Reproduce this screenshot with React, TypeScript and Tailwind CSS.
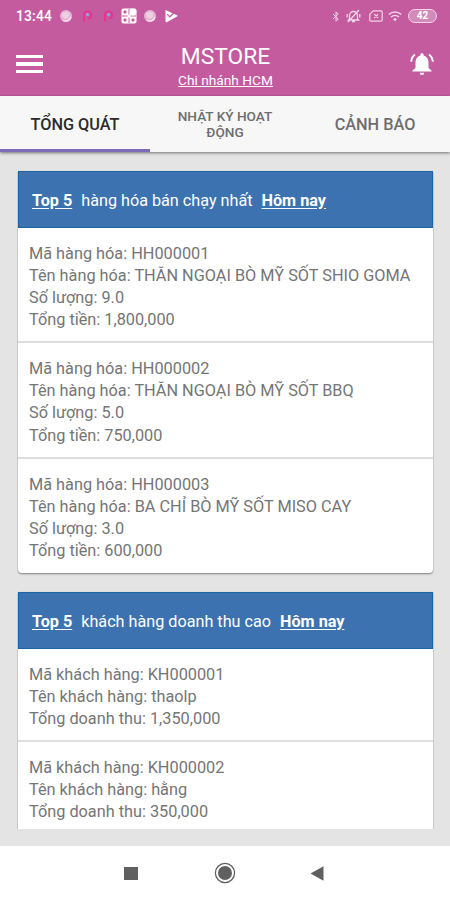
import React, { useState } from "react";

type Line = { label: string; value: string };

const products: Line[][] = [
  [
    { label: "Mã hàng hóa", value: "HH000001" },
    { label: "Tên hàng hóa", value: "THĂN NGOẠI BÒ MỸ SỐT SHIO GOMA" },
    { label: "Số lượng", value: "9.0" },
    { label: "Tổng tiền", value: "1,800,000" },
  ],
  [
    { label: "Mã hàng hóa", value: "HH000002" },
    { label: "Tên hàng hóa", value: "THĂN NGOẠI BÒ MỸ SỐT BBQ" },
    { label: "Số lượng", value: "5.0" },
    { label: "Tổng tiền", value: "750,000" },
  ],
  [
    { label: "Mã hàng hóa", value: "HH000003" },
    { label: "Tên hàng hóa", value: "BA CHỈ BÒ MỸ SỐT MISO CAY" },
    { label: "Số lượng", value: "3.0" },
    { label: "Tổng tiền", value: "600,000" },
  ],
];

const customers: Line[][] = [
  [
    { label: "Mã khách hàng", value: "KH000001" },
    { label: "Tên khách hàng", value: "thaolp" },
    { label: "Tổng doanh thu", value: "1,350,000" },
  ],
  [
    { label: "Mã khách hàng", value: "KH000002" },
    { label: "Tên khách hàng", value: "hằng" },
    { label: "Tổng doanh thu", value: "350,000" },
  ],
];

const Blob = () => (
  <svg className="h-[14px] w-[14px]" viewBox="0 0 14 14">
    <circle cx="7" cy="7" r="6" fill="#e3b4d3" />
    <path d="M3 4.5 7 2.5l3.5 2-1 4L6 10 3.5 8z" fill="#eed0e3" />
    <path d="M4 11.5a5.5 5.5 0 0 0 8-3.5" stroke="#f8e6f2" strokeWidth="1.3" fill="none" />
  </svg>
);

const PIcon = () => (
  <svg className="h-[14px] w-[11px]" viewBox="0 0 11 14" fill="none">
    <path d="M2 12.5V6a3.6 3.6 0 1 1 3.8 3.6" stroke="#ee2f8c" strokeWidth="1.8" />
    <circle cx="5.6" cy="5.6" r="1.6" fill="#8fa6dc" />
  </svg>
);

const StatusBar = () => (
  <div className="flex h-8 items-center justify-between pl-4 pr-[13px]">
    <div className="flex items-center text-white">
      <span className="w-[43px] text-[13.8px] font-medium tracking-[0.2px]">13:44</span>
      <Blob />
      <span className="ml-[9px]"><PIcon /></span>
      <span className="ml-[10px]"><PIcon /></span>
      <svg className="ml-[7px] h-4 w-4" viewBox="0 0 16 16">
        <rect x="0.5" y="0.5" width="15" height="15" rx="2" fill="#fff" />
        <g fill="#c45b9f">
          <rect x="2.5" y="2.5" width="3" height="3" rx="1" />
          <rect x="2.5" y="10.5" width="3" height="3" rx="1" />
          <rect x="10.5" y="10.5" width="3" height="3" rx="1" />
          <path d="M7.5 1h1v5.5h-1zM1 7.6h5.5v1H1zM9.5 7.6H15v1H9.5zM7.5 9.5h1V15h-1z" />
        </g>
        <circle cx="12" cy="4" r="3.4" fill="#fff" />
      </svg>
      <span className="ml-[6px]"><Blob /></span>
      <svg className="ml-[8px] h-[14px] w-[13px]" viewBox="0 0 13 14">
        <path d="M.5 1 12 6.2q1 .6 0 1.2L1.6 13.2Q.5 13.4.5 12.6z" fill="#fff" />
        <path d="m2.2 5.2 2.6 2.6 5-4.8" stroke="#c45b9f" strokeWidth="1.2" fill="none" />
      </svg>
    </div>

    <div className="flex items-center text-[#f3d5e7]">
      <svg className="h-[13px] w-[8px]" viewBox="0 0 8 13" fill="none" stroke="currentColor">
        <path d="m1 4 5.2 5L4 11.2V1.8L6.2 4 1 9" />
      </svg>
      <svg className="ml-[6px] h-[14px] w-[15px]" viewBox="0 0 15 14" fill="none" stroke="currentColor" strokeWidth="1.3">
        <path d="M3.5 10V6.5a4 4 0 0 1 8 0V10l1 1H2.5zM6 12.5h3M2 13 13 1M1.2 5v3.5M13.8 5v3.5" />
      </svg>
      <svg className="ml-[8px] h-[12px] w-[14px]" viewBox="0 0 14 12" fill="none" stroke="currentColor" strokeWidth="1.2">
        <path d="M4.3.8H12q1.2 0 1.2 1.2v8q0 1.2-1.2 1.2H2Q.8 11.2.8 10V4.2zM5.3 4.2l3.8 3.8M9.1 4.2 5.3 8" />
      </svg>
      <svg className="ml-[5px] h-[11px] w-[14px]" viewBox="0 0 14 11" fill="none" stroke="currentColor" strokeWidth="1.4">
        <path d="M.8 3.5a9 9 0 0 1 12.4 0M3 6a6 6 0 0 1 8 0" />
        <path d="M5 8.2a3 3 0 0 1 4 0L7 10.3z" fill="currentColor" stroke="none" />
      </svg>
      <span className="ml-[6px] flex h-[14px] w-[29px] items-center justify-center rounded-full border-[1.5px] border-[#f3d5e7] bg-[#d28abb] text-[10px] font-bold leading-none text-white">
        42
      </span>
    </div>
  </div>
);

const Header = () => (
  <header className="flex h-16 items-center justify-between px-4 text-white">
    <button className="flex w-[27px] flex-col gap-1" aria-label="Menu">
      <span className="h-[3px] bg-white" />
      <span className="h-[4px] bg-white" />
      <span className="h-[3px] bg-white" />
    </button>
    <div className="flex flex-col items-center pr-[2px] pt-[6px]">
      <h1 className="text-[22.8px] leading-[25px]">MSTORE</h1>
      <a className="text-[13.7px] leading-[22px] underline underline-offset-1">Chi nhánh HCM</a>
    </div>
    <svg className="h-6 w-[24px]" viewBox="0 0 24 24" fill="none">
      <path
        d="M12 1.2c-1 0-1.6.7-1.6 1.6v.7C7.3 4.3 5.5 7 5.5 10.3V16l-3 2.5v1h19v-1l-3-2.5v-5.700c0-3.3-1.8-6-4.900-6.8v-.7c0-.9-.6-1.600-1.600-1.600zM9.8 20.8a2.2 2.2 0 0 0 4.4 0z"
        fill="#fff"
      />
      <path d="M5 2.5C2.8 4.2 1.3 6.8 1.2 9.8M19 2.500c2.200 1.700 3.700 4.300 3.800 7.300" stroke="#fff" strokeWidth="1.9" />
    </svg>
  </header>
);

const TopCard = ({ title, items }: { title: string; items: Line[][] }) => (
  <section className="shrink-0 rounded-b bg-white shadow-[0_1px_2px_rgba(0,0,0,0.45)]">
    <div className="flex h-[57px] items-center gap-[9px] border border-[#1c64a3] bg-[#3b72af] px-[13px] pt-[3px] text-[16.2px] text-white">
      <b className="underline underline-offset-2">Top 5</b>
      <span>{title}</span>
      <b className="underline underline-offset-2">Hôm nay</b>
    </div>
    {items.map((lines, i) => (
      <div
        key={i}
        className="border-b-2 border-[#dedede] px-[11px] pb-[10.3px] pt-[14.8px] text-[16.3px] leading-[22.1px] text-[#757575] last:border-b-0 last:pb-[11px]"
      >
        {lines.map((line) => (
          <p key={line.label} className="whitespace-nowrap">
            {line.label}: {line.value}
          </p>
        ))}
      </div>
    ))}
  </section>
);

const tabs = ["TỔNG QUÁT", "NHẬT KÝ HOẠT ĐỘNG", "CẢNH BÁO"];

export default function App() {
  const [active, setActive] = useState(0);

  return (
    <div className="flex h-[900px] w-[450px] flex-col overflow-hidden bg-white font-['Roboto',sans-serif]">
      <div className="h-24 shrink-0 bg-[#c45b9f]">
        <StatusBar />
        <Header />
      </div>

      <nav className="z-10 grid h-14 shrink-0 grid-cols-3 bg-[#f7f7f7] shadow-[0_1px_3px_rgba(0,0,0,0.5)]">
        {tabs.map((tab, i) => (
          <button
            key={tab}
            onClick={() => setActive(i)}
            className={`flex items-center justify-center border-b-[3px] px-6 text-center font-medium ${
              i === 1 ? "pt-[2px] text-[13.6px] leading-4" : "pt-[5px] text-[16.3px]"
            } ${i === active ? "border-[#7d6bb9] text-[#2b2b2b]" : "border-transparent text-[#6e6e6e]"}`}
          >
            {tab}
          </button>
        ))}
      </nav>

      <main className="flex h-[694px] shrink-0 flex-col bg-[#e4e4e4] pb-[17px] pl-[17px] pr-4">
        <div className="flex flex-1 flex-col gap-[19px] overflow-hidden px-px pt-[19px]">
          <TopCard title="hàng hóa bán chạy nhất" items={products} />
          <TopCard title="khách hàng doanh thu cao" items={customers} />
        </div>
      </main>

      <div className="flex flex-1 items-center justify-center gap-[76px] pr-[2px] text-[#606060]">
        <span className="h-[13px] w-[14px] bg-[#606060]" />
        <svg className="h-[22px] w-[22px]" viewBox="0 0 22 22">
          <circle cx="11" cy="11" r="9.6" fill="none" stroke="#606060" strokeWidth="1.3" />
          <circle cx="11" cy="11" r="7" fill="#606060" />
        </svg>
        <svg className="-ml-[2px] h-[15px] w-[14px]" viewBox="0 0 14 15">
          <path d="M13.5.3v14.4L.5 7.5z" fill="#606060" />
        </svg>
      </div>
    </div>
  );
}
